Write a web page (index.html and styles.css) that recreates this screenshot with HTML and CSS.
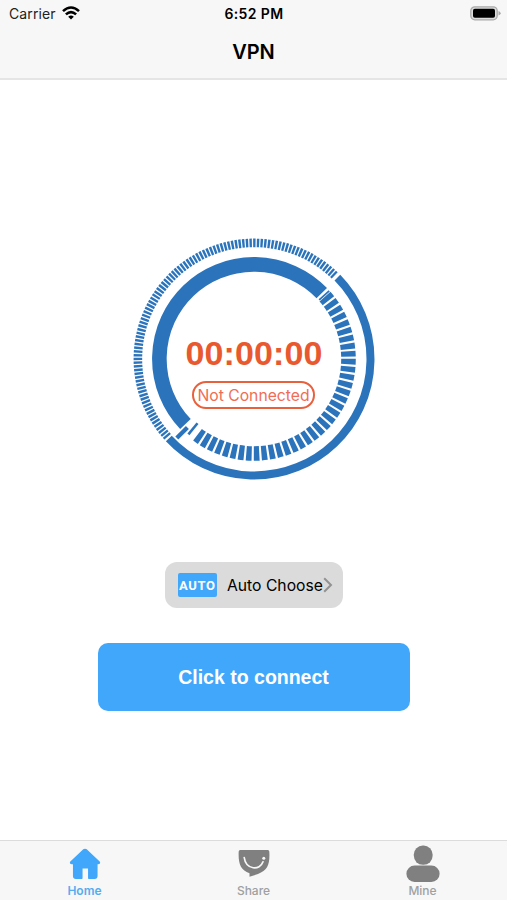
FILE: index.html
```html
<!DOCTYPE html>
<html lang="en">
<head>
<meta charset="utf-8">
<title>VPN</title>
<link rel="stylesheet" href="styles.css">
</head>
<body>
<header class="top">
  <div class="status">
    <div class="carrier"><span>Carrier</span>
      <svg class="wifi" width="18" height="14" viewBox="0 0 18 14"><g fill="none" stroke="#000" stroke-width="2.6"><path d="M1 5.1Q9-2.1 17 5.1"/><path d="M3.9 8.4Q9 3.7 14.1 8.4"/></g><path d="M6.2 10.7Q9 8.4 11.8 10.7L9 13.6Z"/></svg>
    </div>
    <div class="clock">6:52 PM</div>
    <svg class="battery" width="31" height="15" viewBox="0 0 31 15"><rect x=".8" y=".8" width="26.4" height="13" rx="4" fill="#ddd" stroke="#aaa" stroke-width="1.3"/><rect x="3" y="2.8" width="22" height="9" rx="1.8"/><path d="M28.5 5Q30.7 5.7 30.7 7.2T28.5 9.5Z" fill="#aaa"/></svg>
  </div>
  <h1 class="title">VPN</h1>
</header>
<main class="main">
  <section class="dial">
    <svg class="rings" width="242" height="242" viewBox="-121 -121 242 242">
      <g fill="none" stroke="#2b74bc">
        <path d="M83.38 -81.37A116.5 116.5 0 1 1 -85.2 79.45" stroke-width="8"/>
        <path d="M-86.35 77.75A116.2 116.2 0 0 1 80.72 -83.58" stroke-width="8.6" pathLength="976.6" stroke-dasharray="6.6 3.4"/>
        <path d="M-68.55 65.05A94.5 94.5 0 0 1 67.75 -65.88" stroke-width="14.6"/>
        <path d="M70.99 -62.37A94.5 94.5 0 0 1 -56.74 75.57" stroke-width="14.6" pathLength="168.2" stroke-dasharray="3.3 1.275"/>
        <path d="M65.2 -59.1L75.2 -68.1" stroke-width="1.8"/>
        <path d="M-56.5 64.3L-65.6 75.4" stroke-width="2.6"/>
        <path d="M-66.6 68.4L-77.2 79" stroke-width="4.2"/>
      </g>
    </svg>
    <div class="readout">
      <div class="timer">00:00:00</div>
      <div class="state"><span>Not Connected</span></div>
    </div>
  </section>
  <button class="server">
    <span class="auto">AUTO</span>
    <span class="choice">Auto Choose</span>
    <svg class="chevron" width="10" height="16" viewBox="0 0 10 16"><path d="M1.2 1.2L8 8L1.2 14.8" fill="none" stroke="#929292" stroke-width="2"/></svg>
  </button>
  <button class="connect"><span>Click to connect</span></button>
</main>
<nav class="tabs">
  <a class="tab active">
    <svg width="34" height="36" viewBox="0 0 34 36"><path fill="#40a7fb" stroke="#40a7fb" stroke-width="1.5" stroke-linejoin="round" d="M15.3 4.2Q17 2.8 18.7 4.2L31.2 16Q32 17.5 30 17.6H28.8V30Q28.8 32.2 26.6 32.2H20.8V21.8H13.8V32.2H7.9Q5.7 32.2 5.7 30V17.6H4Q2 17.5 2.8 16Z"/></svg>
    <span>Home</span>
  </a>
  <a class="tab">
    <svg width="34" height="36" viewBox="0 0 34 36"><path fill="#808080" d="M3.2 4H30.8Q32.3 4 32.3 5.5C33 18 31 24.5 21 28L12.5 30.8V27.2C3.5 24.2 1.1 17 1.7 5.5Q1.7 4 3.2 4Z"/><path d="M7.2 11.5C9 24.2 23 24.7 26 15.8" fill="none" stroke="#f7f7f7" stroke-width="1.7" stroke-linecap="round"/><circle cx="26.8" cy="12.3" r="1.5" fill="#f7f7f7"/></svg>
    <span>Share</span>
  </a>
  <a class="tab">
    <svg class="person" width="34" height="38" viewBox="0 0 34 38"><g fill="#808080"><rect x="7.8" y=".5" width="18.8" height="19.3" rx="9"/><rect x=".4" y="20.5" width="33.2" height="16.4" rx="8.2"/></g></svg>
    <span>Mine</span>
  </a>
</nav>
</body>
</html>
```
FILE: styles.css
```css
* { box-sizing: border-box; }
body {
  margin: 0;
  height: 900px;
  display: flex;
  flex-direction: column;
  background: #fff;
  color: #000;
  font-family: Inter, "Liberation Sans", sans-serif;
  overflow: hidden;
}
button { border: 0; padding: 0; font: inherit; color: inherit; }
span, .clock, .timer { white-space: nowrap; }
.top {
  height: 80px;
  background: #f7f7f7;
  border-bottom: 2px solid #e5e5e5;
}
.status {
  height: 27px;
  padding: 0 6px 0 9px;
  display: grid;
  grid-template-columns: 1fr auto 1fr;
  align-items: center;
}
.carrier { display: flex; align-items: center; gap: 6px; font-size: 14px; letter-spacing: .1px; color: #222; }
.wifi { margin-top: -2px; }
.clock { font-size: 14px; font-weight: 600; letter-spacing: .4px; margin-right: 2px; }
.battery { justify-self: end; }
.title { margin: 11px 0 0; text-align: center; font-size: 20px; line-height: 28px; font-weight: 600; }
.main { flex: 1; display: flex; flex-direction: column; align-items: center; padding-top: 158px; }
.dial { width: 242px; height: 242px; display: grid; margin-left: 1px; }
.rings, .readout { grid-area: 1 / 1; }
.readout { display: flex; flex-direction: column; align-items: center; padding-top: 95px; }
.timer { font: bold 34px/40px "Liberation Sans", sans-serif; color: #e9592f; letter-spacing: .1px; }
.state {
  width: 123px;
  height: 28px;
  margin: 8px 1px 0 0;
  border: 2px solid #e9603d;
  border-radius: 14px;
  display: flex;
  align-items: center;
  justify-content: center;
  color: #ef6d56;
  font-size: 15.7px;
}
.server {
  width: 178px;
  height: 46px;
  margin-top: 82px;
  padding-left: 13px;
  background: #dbdbdb;
  border-radius: 12px;
  display: flex;
  align-items: center;
}
.auto {
  width: 39px;
  height: 24px;
  border-radius: 2px;
  background: #40a7fb;
  color: #fff;
  font: bold 13px/25px Roboto, sans-serif;
  letter-spacing: .7px;
  text-indent: .7px;
  text-align: center;
}
.choice { margin-left: 10.5px; font-size: 15.7px; }
.connect {
  width: 312px;
  height: 68px;
  margin-top: 35px;
  border-radius: 10px;
  background: #40a7fb;
  color: #fff;
  font: bold 19.5px/68px "Liberation Sans", sans-serif;
}
.tabs {
  height: 60px;
  background: #f7f7f7;
  border-top: 1px solid #dcdcdc;
  display: grid;
  grid-template-columns: repeat(3, 1fr);
}
.tab {
  display: flex;
  flex-direction: column;
  align-items: center;
  padding-top: 5px;
  color: #a0a0a0;
  font-size: 12px;
  line-height: 16px;
  font-weight: 500;
}
.tab span { margin-top: 1px; }
.tab .person { margin: -1px 0; }
.active { color: #55acee; font-weight: 600; }
```
